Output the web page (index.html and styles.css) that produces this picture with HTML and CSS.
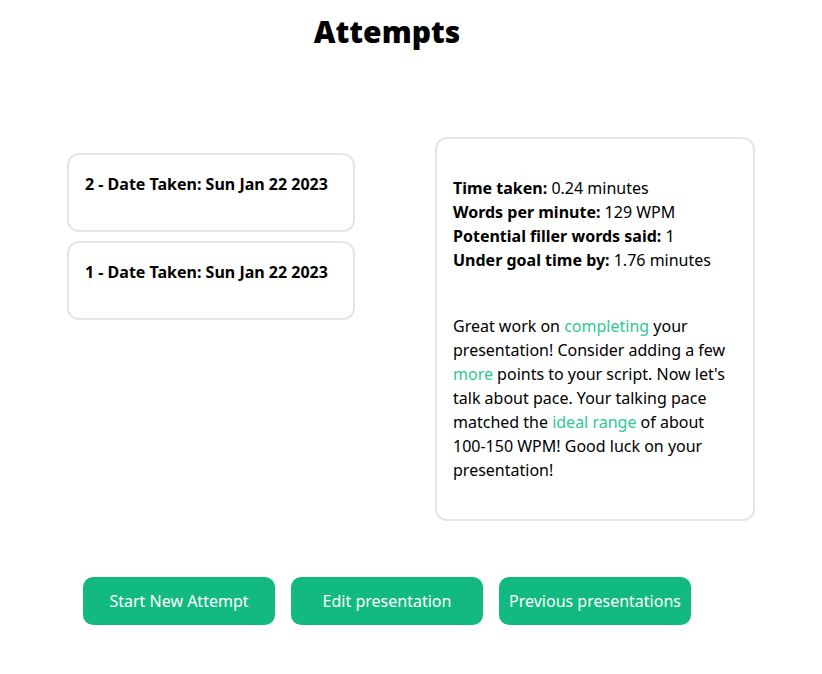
FILE: index.html
```html
<!DOCTYPE html>
<html lang="en">
<head>
<meta charset="utf-8">
<title>Attempts</title>
<link rel="stylesheet" href="styles.css">
</head>
<body>
<div class="page">
  <h1 class="title">Attempts</h1>
  <div class="results">
    <div class="attempt-list">
      <div class="attempt-card">2 - Date Taken: Sun Jan 22 2023</div>
      <div class="attempt-card">1 - Date Taken: Sun Jan 22 2023</div>
    </div>
    <div class="detail-card">
      <div class="stats">
        <div><b>Time taken:</b> 0.24 minutes</div>
        <div><b>Words per minute:</b> 129 WPM</div>
        <div><b>Potential filler words said:</b> 1</div>
        <div><b>Under goal time by:</b> 1.76 minutes</div>
      </div>
      <p class="feedback">Great work on <span class="hl">completing</span> your presentation! Consider adding a few <span class="hl">more</span> points to your script. Now let's talk about pace. Your talking pace matched the <span class="hl">ideal range</span> of about 100-150 WPM! Good luck on your presentation!</p>
    </div>
  </div>
  <div class="actions">
    <button class="btn">Start New Attempt</button>
    <button class="btn">Edit presentation</button>
    <button class="btn">Previous presentations</button>
  </div>
</div>
</body>
</html>
```

FILE: styles.css
```css
html, body {
  margin: 0;
  padding: 0;
  background: #ffffff;
}
body {
  font-family: "Noto Sans", "Open Sans", sans-serif;
  font-size: 16px;
  line-height: 24px;
  color: #000;
}
.page {
  width: 774px;
}
.title {
  margin: 10px 0 0;
  font-size: 30px;
  line-height: 44px;
  font-weight: 900;
  text-align: center;
}
.results {
  display: flex;
  align-items: flex-start;
  gap: 80px;
  padding-left: 67px;
  margin-top: 83px;
}
.attempt-list {
  display: flex;
  flex-direction: column;
  gap: 9px;
  width: 288px;
  padding-top: 16px;
}
.attempt-card {
  border: 2px solid #e5e5e8;
  border-radius: 12px;
  padding: 17px 16px 34px;
  font-weight: 700;
}
.detail-card {
  flex: 0 0 320px;
  box-sizing: border-box;
  border: 2px solid #e5e5e8;
  border-radius: 12px;
  padding: 37px 16px 37px;
}
.feedback {
  margin: 42px 0 0;
}
.hl {
  color: #2dc997;
}
.actions {
  display: flex;
  justify-content: center;
  gap: 16px;
  margin-top: 56px;
}
.btn {
  width: 192px;
  height: 48px;
  border: none;
  border-radius: 10px;
  background: #12b981;
  color: #ffffff;
  font-family: "Noto Sans", "Open Sans", sans-serif;
  font-size: 16px;
  padding: 0;
}
```
